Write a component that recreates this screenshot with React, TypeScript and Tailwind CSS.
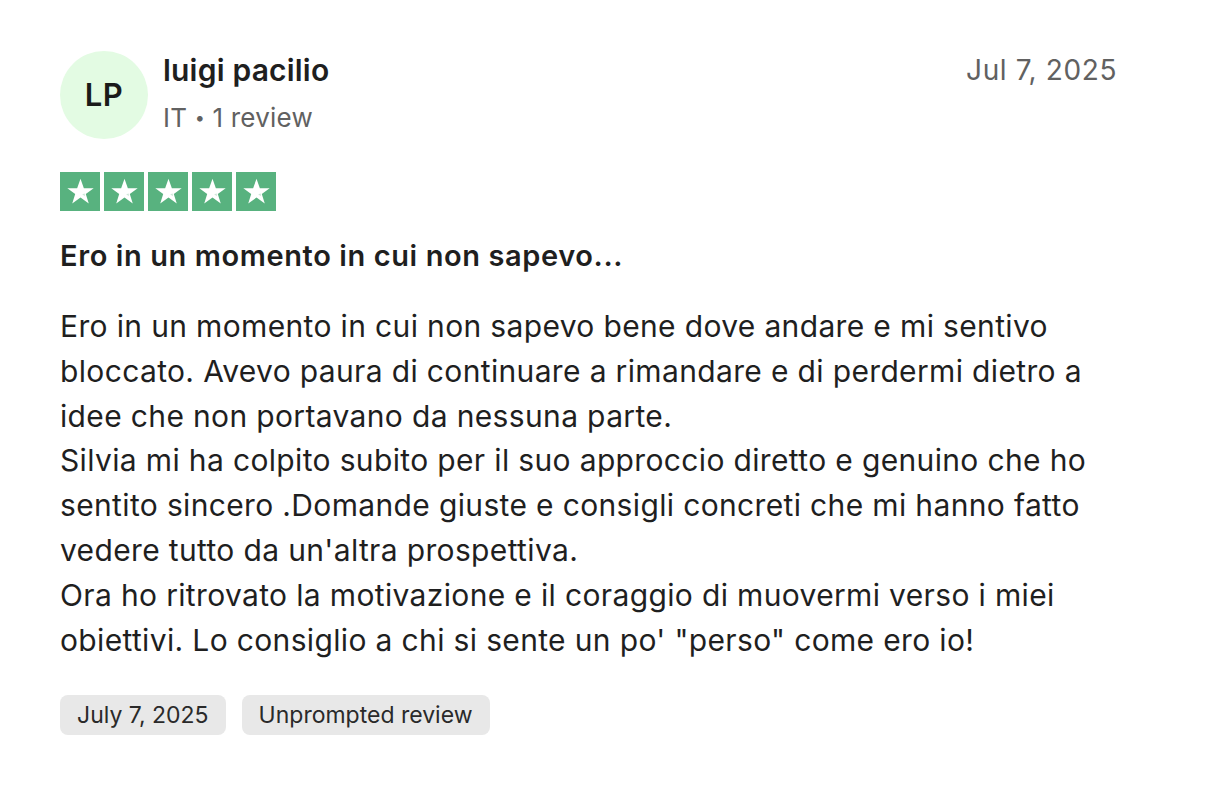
import React from "react";

const lines = [
  "Ero in un momento in cui non sapevo bene dove andare e mi sentivo",
  "bloccato. Avevo paura di continuare a rimandare e di perdermi dietro a",
  "idee che non portavano da nessuna parte.",
  "Silvia mi ha colpito subito per il suo approccio diretto e genuino che ho",
  "sentito sincero .Domande giuste e consigli concreti che mi hanno fatto",
  "vedere tutto da un'altra prospettiva.",
  "Ora ho ritrovato la motivazione e il coraggio di muovermi verso i miei",
  "obiettivi. Lo consiglio a chi si sente un po' \"perso\" come ero io!",
];

function Star() {
  return (
    <div className="w-[40px] h-[39px] bg-[#58b27f] flex items-center justify-center">
      <svg width="31" height="31" viewBox="0 0 24 24">
        <path
          d="M12 2.2l2.6 7.2h7.6l-6.1 4.5 2.3 7.3L12 16.7l-6.4 4.5 2.3-7.3-6.1-4.5h7.6z"
          fill="#fff"
        />
        <path d="M15.4 15.6l-2.1-1.4 2-.7z" fill="#58b27f" opacity="0.3" />
      </svg>
    </div>
  );
}

export default function App() {
  return (
    <div
      className="min-h-screen bg-white text-[#1f1f1f]"
      style={{ fontFamily: "Inter, 'Noto Sans', sans-serif" }}
    >
      <div className="pl-[60px] pr-[89px] pt-[51px]">
        {/* Header */}
        <div className="flex items-start justify-between">
          <div className="flex items-start gap-[15px]">
            <div className="w-[88px] h-[88px] rounded-full bg-[#e3fbe3] flex items-center justify-center text-[31px] font-semibold text-[#1a1a1a] tracking-[0.5px]">
              LP
            </div>
            <div>
              <div className="text-[30px] font-semibold leading-[38px] tracking-[0.2px]">
                luigi pacilio
              </div>
              <div className="text-[26px] text-[#616161] leading-[36px] mt-[11px] tracking-[0.2px]">
                IT <span className="text-[18px] align-[3px]">•</span> 1 review
              </div>
            </div>
          </div>
          <div className="text-[28px] text-[#616161] leading-[38px] tracking-[0.6px]">
            Jul 7, 2025
          </div>
        </div>

        {/* Stars */}
        <div className="flex gap-[4px] mt-[33px]">
          <Star />
          <Star />
          <Star />
          <Star />
          <Star />
        </div>

        {/* Title */}
        <div className="mt-[26px] text-[29px] font-semibold leading-[38px] tracking-[0.6px]">
          Ero in un momento in cui non sapevo...
        </div>

        {/* Body */}
        <div className="mt-[29px] text-[30px] leading-[44.8px] tracking-[0.35px] whitespace-nowrap">
          {lines.map((l) => (
            <div key={l}>{l}</div>
          ))}
        </div>

        {/* Tags */}
        <div className="flex gap-[16px] mt-[33px]">
          <span className="h-[40px] px-[17px] rounded-[8px] bg-[#e8e8e8] flex items-center text-[23px] text-[#2a2a2a]">
            July 7, 2025
          </span>
          <span className="h-[40px] px-[17px] rounded-[8px] bg-[#e8e8e8] flex items-center text-[23px] text-[#2a2a2a]">
            Unprompted review
          </span>
        </div>
      </div>
    </div>
  );
}
